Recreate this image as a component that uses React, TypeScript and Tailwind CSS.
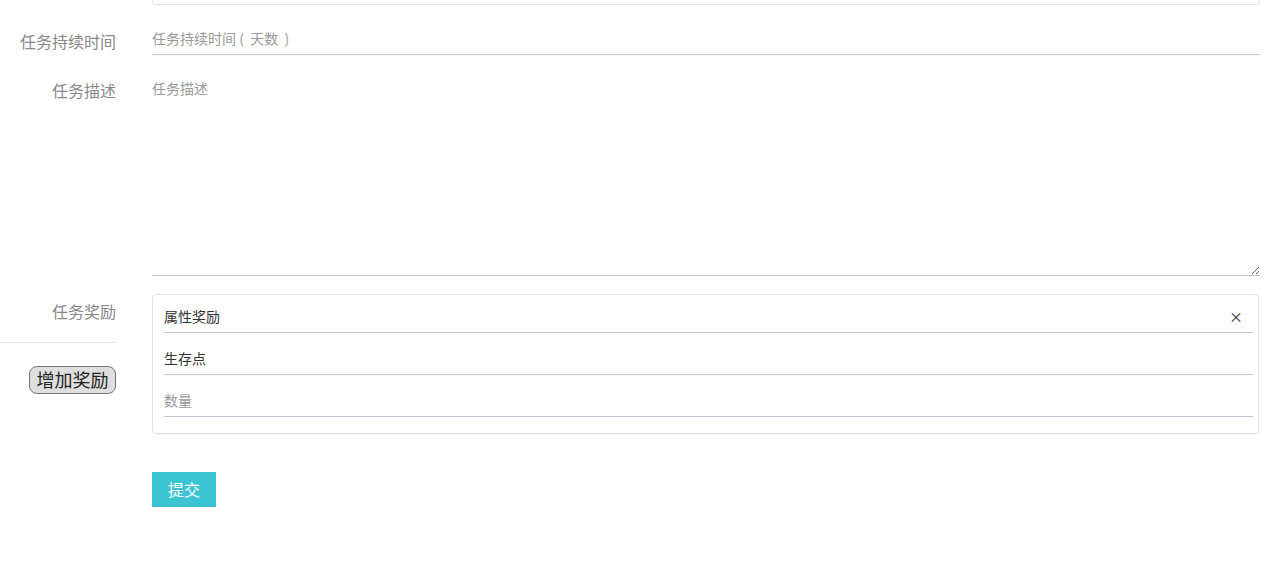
import type { ReactElement } from "react";

const FONT = "font-['Noto_Sans_CJK_SC','Noto_Sans',sans-serif]";

function Label({ text }: { text: string }): ReactElement {
  return (
    <div className="w-[116px] shrink-0 text-right text-[16px] leading-[20px] text-[#888]">
      {text}
    </div>
  );
}

export default function App(): ReactElement {
  return (
    <div className={`${FONT} min-h-[588px] bg-white`}>
      {/* tail of the box above, scrolled out of view */}
      <div className="ml-[152px] mr-[20px] h-[5px] rounded-b border-x border-b border-[#e3e3e3]" />

      {/* duration */}
      <div className="mt-[19px] flex gap-[36px]">
        <div className="pt-[7px]">
          <Label text="任务持续时间" />
        </div>
        <input
          type="text"
          placeholder="任务持续时间 (  天数  )"
          className="mr-[20px] h-[31px] flex-1 border-b border-[#c2cad8] bg-transparent pb-[2px] text-[14px] text-[#333] outline-none placeholder:text-[#999]"
        />
      </div>

      {/* description */}
      <div className="mt-[19px] flex gap-[36px]">
        <div className="pt-[6px]">
          <Label text="任务描述" />
        </div>
        <textarea
          placeholder="任务描述"
          className="mr-[20px] h-[202px] flex-1 border-b border-[#c2cad8] bg-transparent pt-[4px] text-[14px] leading-[20px] text-[#333] outline-none placeholder:text-[#999]"
        />
      </div>

      {/* rewards */}
      <div className="mt-[18px] flex gap-[36px]">
        <div className="flex w-[116px] shrink-0 flex-col items-end">
          <div className="pt-[7px]">
            <Label text="任务奖励" />
          </div>
          <div className="mt-[21px] h-px w-[116px] bg-[#e6e6e6]" />
          <button
            type="button"
            className="mt-[23px] h-[28px] w-[87px] rounded-[8px] border border-[#777] bg-[#dedede] pb-[2px] text-[18px] leading-[22px] text-[#222]"
          >
            增加奖励
          </button>
        </div>

        <div className="mr-[21px] flex-1 rounded border border-[#e3e3e3] pb-[16px] pl-[11px] pr-[5px] pt-[7px] shadow-[1px_1px_1px_rgba(0,0,0,0.03)]">
          <div className="flex h-[31px] items-center border-b border-[#c2cad8] pb-[2px] text-[14px] text-[#333]">
            <span className="flex-1">属性奖励</span>
            <span className="mr-[10px] text-[14px] leading-none text-[#333]">×</span>
          </div>
          <div className="mt-[11px] flex h-[31px] items-center border-b border-[#c2cad8] pb-[2px] text-[14px] text-[#333]">
            生存点
          </div>
          <input
            type="text"
            placeholder="数量"
            className="mt-[11px] block h-[31px] w-full border-b border-[#c2cad8] bg-transparent pb-[2px] text-[14px] text-[#333] outline-none placeholder:text-[#999]"
          />
        </div>
      </div>

      <div className="ml-[152px] mt-[38px]">
        <button
          type="button"
          className="h-[35px] w-[64px] bg-[#3bc5d3] pb-[1px] text-[16px] text-white"
        >
          提交
        </button>
      </div>
    </div>
  );
}
